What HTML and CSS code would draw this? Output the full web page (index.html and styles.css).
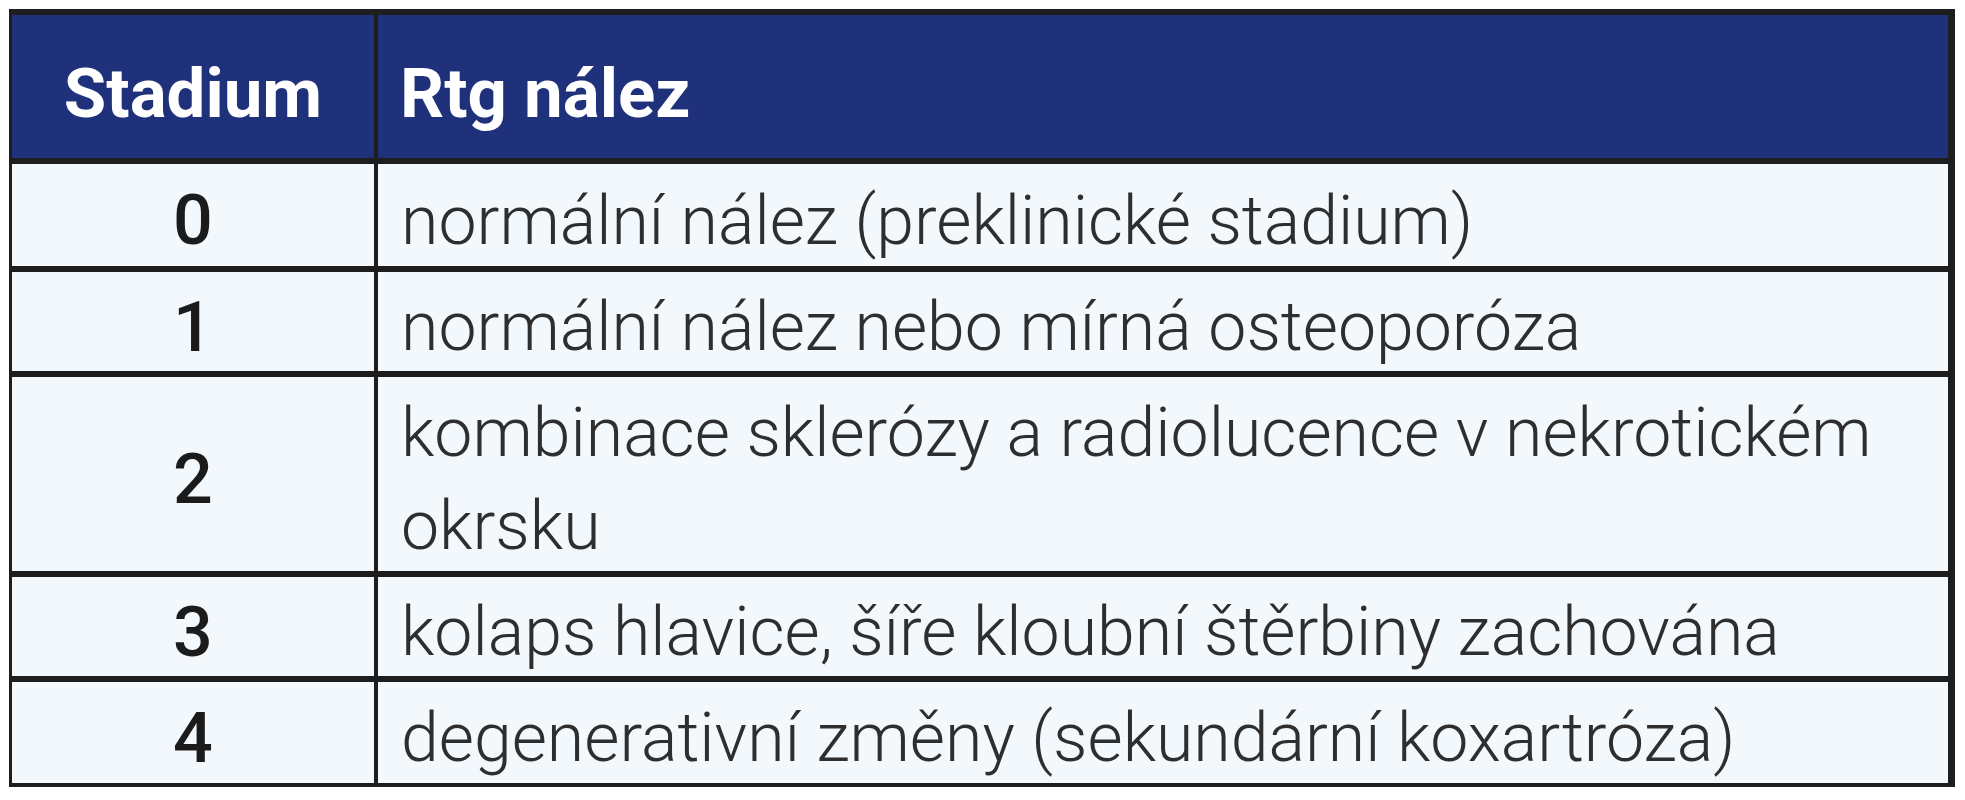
FILE: index.html
```html
<!DOCTYPE html>
<html lang="cs">
<head>
<meta charset="utf-8">
<title>Stadium – Rtg nález</title>
<link rel="stylesheet" href="styles.css">
</head>
<body>
<div class="page">
  <table class="stages">
    <thead>
      <tr class="head-row">
        <th class="col-stage">Stadium</th>
        <th class="col-finding">Rtg nález</th>
      </tr>
    </thead>
    <tbody>
      <tr class="r0">
        <td class="stage">0</td>
        <td class="finding"><div class="txt">normální nález (preklinické stadium)</div></td>
      </tr>
      <tr class="r1">
        <td class="stage">1</td>
        <td class="finding"><div class="txt">normální nález nebo mírná osteoporóza</div></td>
      </tr>
      <tr class="r2">
        <td class="stage">2</td>
        <td class="finding"><div class="txt">kombinace sklerózy a radiolucence v nekrotickém<br>okrsku</div></td>
      </tr>
      <tr class="r3">
        <td class="stage">3</td>
        <td class="finding"><div class="txt">kolaps hlavice, šíře kloubní štěrbiny zachována</div></td>
      </tr>
      <tr class="r4 last">
        <td class="stage">4</td>
        <td class="finding"><div class="txt">degenerativní změny (sekundární koxartróza)</div></td>
      </tr>
    </tbody>
  </table>
</div>
</body>
</html>
```
FILE: styles.css
```css
html, body {
  margin: 0;
  padding: 0;
  background: #ffffff;
}

.page {
  padding: 9px 10px 0 9px;
}

.stages {
  border-collapse: separate;
  border-spacing: 0;
  width: 1946px;
  table-layout: fixed;
  border-style: solid;
  border-color: #1e1e1e;
  border-width: 6px 7px 4px 3px;
  font-family: Roboto, "Liberation Sans", sans-serif;
}

.stages .cell {
  padding: 0;
}

.stages th,
.stages td {
  box-sizing: border-box;
  border-bottom: 6px solid #1e1e1e;
}

.stages tr.last td {
  border-bottom: 0;
}

.stages .col-stage,
.stages .stage {
  width: 366px;
  border-right: 4px solid #1e1e1e;
}

/* header */
.stages .head-row th {
  height: 149px;
  background: #1f317a;
  color: #ffffff;
  font-size: 69px;
  font-weight: 700;
  line-height: 80px;
  vertical-align: middle;
  padding: 14px 0 0 0;
}

.stages .head-row th.col-stage {
  text-align: center;
}

.stages .head-row th.col-finding {
  text-align: left;
  padding-left: 22px;
}

/* body rows */
.stages tbody td {
  background: #f3f8fd;
  vertical-align: middle;
}

.r0 td { height: 108px; }
.r1 td { height: 105px; }
.r2 td { height: 200px; }
.r3 td { height: 105px; }
.r4 td { height: 101px; }

.stages td.stage {
  text-align: center;
  color: #1b1b1b;
  font-size: 70px;
  font-weight: 500;
  line-height: 80px;
  padding: 10px 0 0 0;
}

.stages td.finding {
  padding: 0 0 0 23px;
  color: #2e2e2e;
  font-size: 68px;
  font-weight: 300;
}

.finding .txt {
  line-height: 93px;
  margin-top: 6px;
  margin-bottom: -6px;
  white-space: nowrap;
}
```
